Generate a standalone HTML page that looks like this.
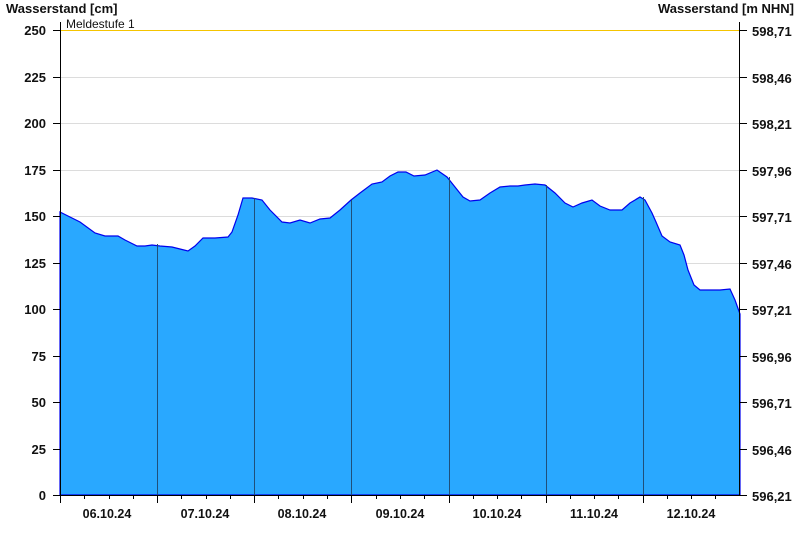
<!DOCTYPE html>
<html><head><meta charset="utf-8"><style>
html,body{margin:0;padding:0;background:#fff;width:800px;height:550px;overflow:hidden}
svg{display:block;font-family:"Liberation Sans",Arial,sans-serif}
</style></head><body>
<svg width="800" height="550" viewBox="0 0 800 550">
<g stroke="#dcdcdc" stroke-width="1">
<line x1="60" x2="740" y1="77.5" y2="77.5"/><line x1="60" x2="740" y1="123.5" y2="123.5"/><line x1="60" x2="740" y1="170.5" y2="170.5"/><line x1="60" x2="740" y1="216.5" y2="216.5"/><line x1="60" x2="740" y1="263.5" y2="263.5"/><line x1="60" x2="740" y1="309.5" y2="309.5"/><line x1="60" x2="740" y1="356.5" y2="356.5"/><line x1="60" x2="740" y1="402.5" y2="402.5"/><line x1="60" x2="740" y1="449.5" y2="449.5"/>
</g>
<path fill="#29a8ff" stroke="#0000ee" stroke-width="1.2" d="M60,212 L68,216 L80,222 L95,233 L105,236 L118,236 L125,240 L137,246 L145,246 L152,245 L160,246 L172,247 L180,249 L188,251 L195,246 L203,238 L215,238 L228,237 L232,232 L238,215 L243,198 L252,198 L262,200 L270,210 L282,222 L290,223 L300,220 L310,223 L320,219 L330,218 L340,210 L351,200 L360,193 L372,184 L382,182 L390,176 L398,172 L406,172 L414,176 L425,175 L437,170 L447,177 L455,187 L463,197 L470,201 L480,200 L490,193 L500,187 L510,186 L518,186 L525,185 L535,184 L545,185 L555,193 L565,203 L573,207 L582,203 L592,200 L600,206 L610,210 L622,210 L630,203 L640,197 L645,200 L652,213 L656,222 L662,236 L670,242 L680,245 L684,255 L688,270 L694,285 L700,290 L710,290 L720,290 L730,289 L735,300 L740,314 L740,495 L60,495 Z"/>
<g stroke="#1f4f7a" stroke-width="1">
<line x1="157.5" x2="157.5" y1="244" y2="495"/><line x1="254.5" x2="254.5" y1="198" y2="495"/><line x1="351.5" x2="351.5" y1="200" y2="495"/><line x1="449.5" x2="449.5" y1="177" y2="495"/><line x1="546.5" x2="546.5" y1="185" y2="495"/><line x1="643.5" x2="643.5" y1="197" y2="495"/>
</g>
<line x1="60" x2="740" y1="30.5" y2="30.5" stroke="#f5c400" stroke-width="1"/>
<g stroke="#000" stroke-width="1">
<line x1="60.5" x2="60.5" y1="22" y2="503"/><line x1="739.5" x2="739.5" y1="22" y2="495"/>
<line x1="60" x2="740" y1="495.5" y2="495.5"/>
<path d="M53,30.5H60M53,77.5H60M53,123.5H60M53,170.5H60M53,216.5H60M53,263.5H60M53,309.5H60M53,356.5H60M53,402.5H60M53,449.5H60M53,495.5H60"/>
<path d="M740,30.5H747M740,77.5H747M740,123.5H747M740,170.5H747M740,216.5H747M740,263.5H747M740,309.5H747M740,356.5H747M740,402.5H747M740,449.5H747M740,495.5H747"/>
<path d="M157.5,495V503M254.5,495V503M351.5,495V503M449.5,495V503M546.5,495V503M643.5,495V503"/>
<path d="M84.5,495V499M109.5,495V499M133.5,495V499M181.5,495V499M206.5,495V499M230.5,495V499M278.5,495V499M303.5,495V499M327.5,495V499M376.5,495V499M400.5,495V499M424.5,495V499M473.5,495V499M497.5,495V499M521.5,495V499M570.5,495V499M594.5,495V499M618.5,495V499M667.5,495V499M691.5,495V499M715.5,495V499"/>
</g>
<g font-size="13" font-weight="bold" fill="#111">
<text x="6" y="13">Wasserstand [cm]</text>
<text x="794" y="13" text-anchor="end">Wasserstand [m NHN]</text>
<g text-anchor="end">
<text x="46" y="35">250</text><text x="46" y="82">225</text><text x="46" y="128">200</text><text x="46" y="175">175</text><text x="46" y="221">150</text><text x="46" y="268">125</text><text x="46" y="314">100</text><text x="46" y="361">75</text><text x="46" y="407">50</text><text x="46" y="454">25</text><text x="46" y="500">0</text>
</g>
<g>
<text x="752" y="36">598,71</text><text x="752" y="83">598,46</text><text x="752" y="129">598,21</text><text x="752" y="176">597,96</text><text x="752" y="222">597,71</text><text x="752" y="269">597,46</text><text x="752" y="315">597,21</text><text x="752" y="362">596,96</text><text x="752" y="408">596,71</text><text x="752" y="455">596,46</text><text x="752" y="501">596,21</text>
</g>
<g text-anchor="middle" font-size="12.5">
<text x="107" y="518">06.10.24</text><text x="205" y="518">07.10.24</text><text x="302" y="518">08.10.24</text><text x="400" y="518">09.10.24</text><text x="497" y="518">10.10.24</text><text x="594" y="518">11.10.24</text><text x="691" y="518">12.10.24</text>
</g>
</g>
<text x="66" y="28" font-size="12" fill="#111">Meldestufe 1</text>
</svg>
</body></html>
